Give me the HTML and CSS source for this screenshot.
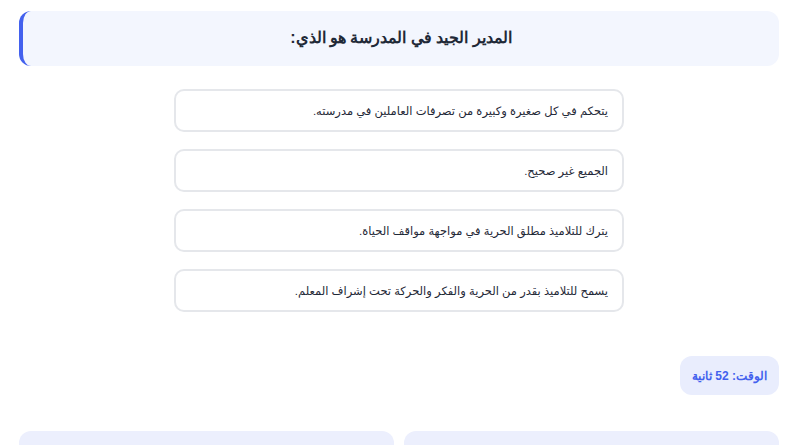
FILE: index.html
```html
<!DOCTYPE html>
<html lang="ar" dir="rtl">
<head>
<meta charset="utf-8">
<link rel="stylesheet" href="styles.css">
</head>
<body>
<div class="page">
  <div class="question">المدير الجيد في المدرسة هو الذي:</div>
  <div class="options">
    <div class="option">يتحكم في كل صغيرة وكبيرة من تصرفات العاملين في مدرسته.</div>
    <div class="option">الجميع غير صحيح.</div>
    <div class="option">يترك للتلاميذ مطلق الحرية في مواجهة مواقف الحياة.</div>
    <div class="option">يسمح للتلاميذ بقدر من الحرية والفكر والحركة تحت إشراف المعلم.</div>
  </div>
  <div class="timer-row">
    <div class="timer">الوقت: 52 ثانية</div>
  </div>
  <div class="bottom">
    <div class="panel"></div>
    <div class="panel"></div>
  </div>
</div>
</body>
</html>
```
FILE: styles.css
```css
html, body {
  margin: 0;
  padding: 0;
  background: #ffffff;
  overflow: hidden;
}
body {
  font-family: "Liberation Sans", Arial, sans-serif;
  color: #1f2937;
}
.page {
  padding: 11px 14px 0 19px;
  display: flex;
  flex-direction: column;
}
.question {
  height: 55px;
  box-sizing: border-box;
  background: #f3f6fe;
  border-left: 4px solid #4361ee;
  border-radius: 12px;
  display: flex;
  align-items: center;
  justify-content: center;
  font-weight: bold;
  font-size: 16px;
  color: #1f2937;
  padding-bottom: 3px;
}
.options {
  margin-top: 23px;
  display: flex;
  flex-direction: column;
  align-items: center;
  gap: 17px;
}
.option {
  width: 450px;
  height: 43px;
  box-sizing: border-box;
  border: 2px solid #e5e7eb;
  border-radius: 10px;
  padding: 0 14px;
  display: flex;
  align-items: center;
  font-family: "Liberation Sans", Arial, "DejaVu Sans", sans-serif;
  font-size: 11.5px;
  color: #1f2937;
  background: #ffffff;
}
.timer-row {
  margin-top: 44px;
  display: flex;
}
.timer {
  height: 39px;
  box-sizing: border-box;
  padding: 0 12px;
  display: flex;
  align-items: center;
  background: #e9edfd;
  border-radius: 12px;
  color: #4361ee;
  font-weight: bold;
  font-size: 12px;
}
.bottom {
  margin-top: 36px;
  display: flex;
  gap: 10px;
}
.panel {
  flex: 1;
  height: 14px;
  background: #eceffd;
  border-radius: 12px 12px 0 0;
}
```
